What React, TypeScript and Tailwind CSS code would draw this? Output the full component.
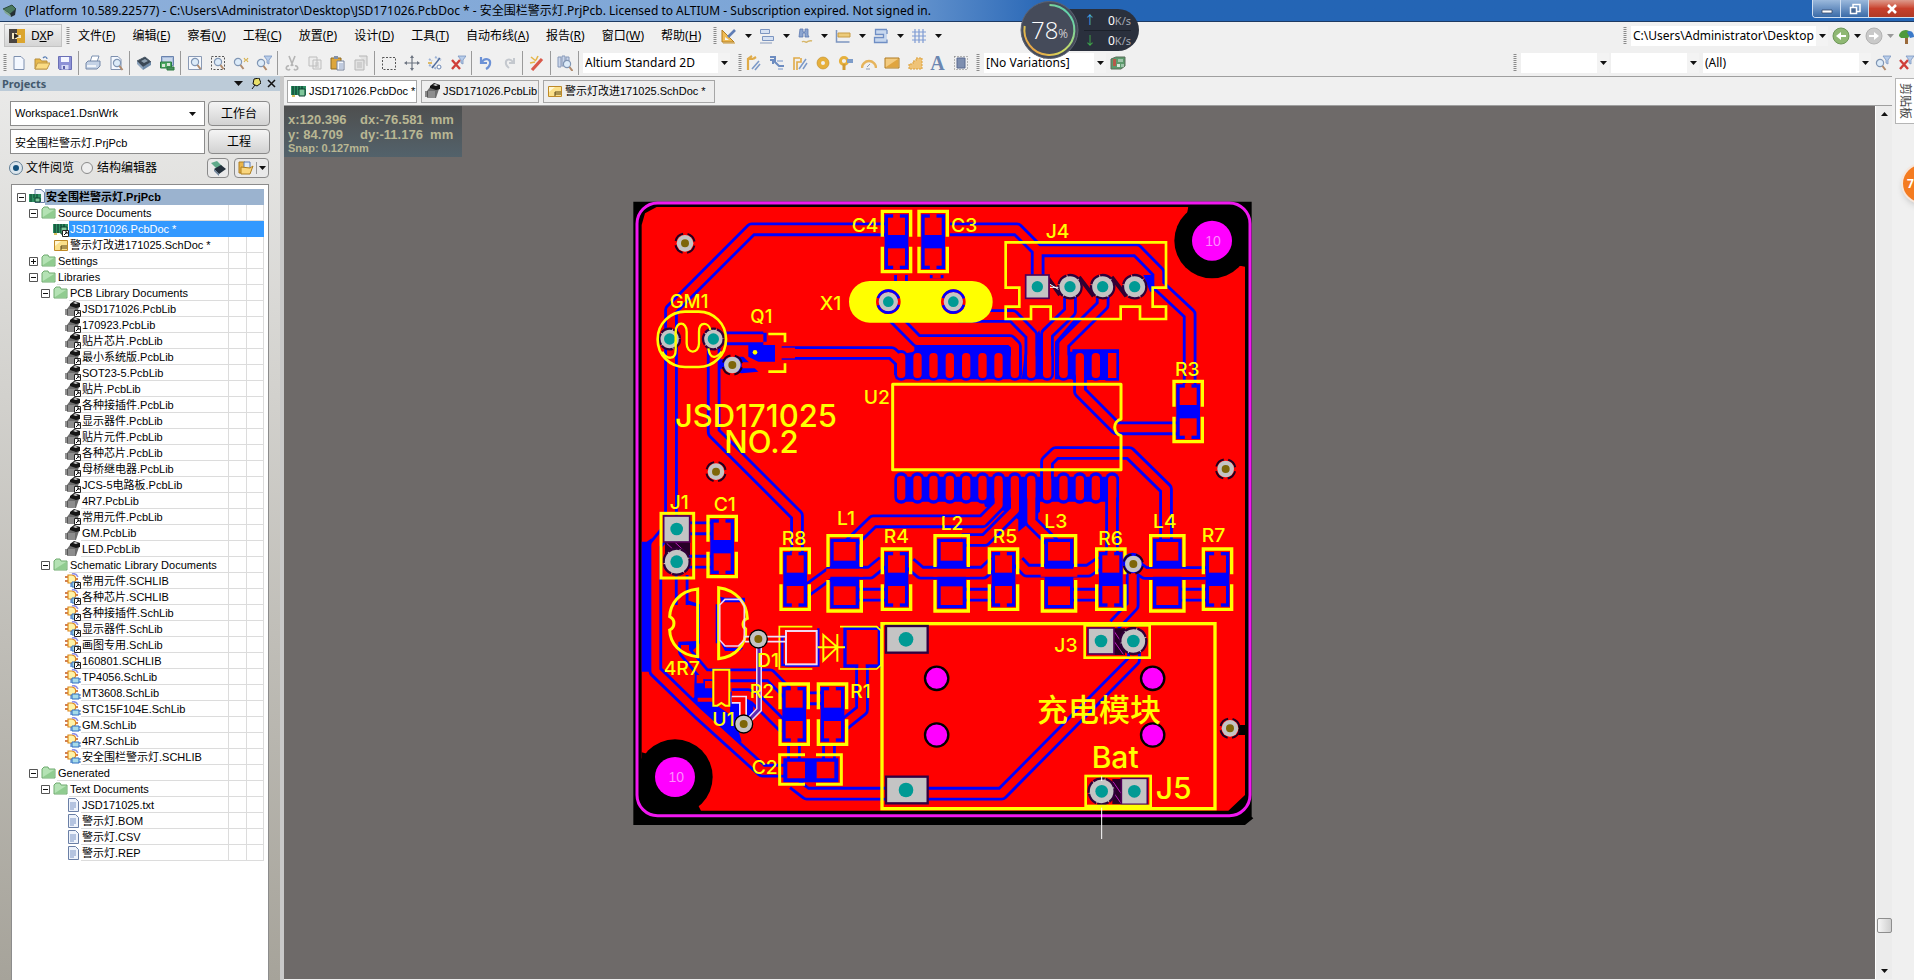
import React from "react";

/* ---------- small drawing helpers ---------- */

type SvgProps = { children: React.ReactNode; w?: number; h?: number };

function Ico({ children, w = 16, h = 16 }: SvgProps) {
  return (
    <svg width={w} height={h} viewBox={`0 0 ${w} ${h}`} aria-hidden="true" className="shrink-0">
      {children}
    </svg>
  );
}

const page = <path d="M3 1.5h7l3 3v10H3z" fill="#f4f8ff" stroke="#7d8fae" />;
const lens = (
  <>
    <circle cx="8" cy="7" r="3.6" fill="#dcebf9" stroke="#8096b4" strokeWidth="1.2" />
    <path d="M10.5 10l3 4" stroke="#b08a6c" strokeWidth="2" />
  </>
);
const funnel = <path d="M8 1h8l-3 4v4l-2-1V5z" fill="#b8cdea" stroke="#7a94c0" strokeWidth=".8" />;
const redX = <path d="M2 5l8 9M10 5l-8 9" stroke="#cf3f3a" strokeWidth="2.4" />;

const icons: Record<string, React.ReactNode> = {
  new: page,
  open: (
    <>
      <path d="M1 14V4h5l1.500 2H13v8z" fill="#e8b94a" stroke="#b58d3c" />
      <path d="M3.500 8H16l-3 6H1z" fill="#fbdc83" stroke="#c09a4c" />
      <path d="M9 3c2-2 4-1 4 1" fill="none" stroke="#5a7fb5" strokeWidth="1.300" />
    </>
  ),
  save: (
    <>
      <path d="M1.500 1.500h13v13h-12l-1-1z" fill="#8d92d6" stroke="#6a6fb5" />
      <path d="M4 2h8v5H4z" fill="#f4f6ff" />
      <path d="M4.500 10h7v4.500h-7z" fill="#d6daf5" />
      <path d="M6 11h2v3H6z" fill="#5b60a8" />
    </>
  ),
  print: (
    <>
      <path d="M5 7l2-6h7l-2 6z" fill="#fff" stroke="#7b90b0" />
      <path d="M1 8l2-2h12v5l-3 3H1z" fill="#c4d2e6" stroke="#7488a8" />
      <path d="M2 11h9" stroke="#fff" strokeWidth="1.500" />
    </>
  ),
  preview: (
    <>
      {page}
      <g transform="translate(1 1)">{lens}</g>
    </>
  ),
  chip: (
    <>
      <path d="M1 6l8-4 6 5-8 5z" fill="#3b4856" stroke="#4a5866" />
      <path d="M1 6l6 6v3L1 9z" fill="#8ea4bd" />
      <path d="M7 12l8-5v3l-8 5z" fill="#6e8aa8" />
      <path d="M5 6l4-2 3 2-4 2z" fill="#8fa0b0" />
    </>
  ),
  board: (
    <>
      <path d="M2.500 1.500h12v9h-12z" fill="#a9bddc" stroke="#6a83ad" />
      <path d="M4 4h9M4 6h9" stroke="#e8f0fa" />
      <path d="M1.500 7h11v6h-11z" fill="#4faa62" stroke="#2a7a40" />
      <path d="M3 9h3v3H3zM8 8h3v3H8z" fill="#d8e6d8" />
      <path d="M8 12h7v3H8z" fill="#4b8f5c" stroke="#2a7a40" />
    </>
  ),
  fitdoc: (
    <>
      <path d="M1.500 1.500h13v13h-13z" fill="#f4f7fc" stroke="#8a9ab5" />
      {lens}
    </>
  ),
  fitarea: (
    <>
      <path d="M1.500 1.500h13v13h-13z" fill="none" stroke="#555" strokeDasharray="2 1.500" />
      {lens}
    </>
  ),
  fitsel: (
    <>
      <g transform="translate(-3 0)">{lens}</g>
      <path d="M11 3l1.500 2L11 7M15 3l-1.500 2L15 7" stroke="#d6b04a" strokeWidth="1.200" fill="none" />
    </>
  ),
  fitfilter: (
    <>
      <g transform="translate(-3 1)">{lens}</g>
      {funnel}
    </>
  ),
  cut: (
    <path d="M5 1l4 10M11 1L7 11M5 11a2 2 0 1 0 1 3M11 11a2 2 0 1 1-1 3" fill="none" stroke="#b5b5b5" strokeWidth="1.600" />
  ),
  copy: (
    <>
      <path d="M2 2h8v9H2zM6 5h8v9H6z" fill="#ededed" stroke="#bdbdbd" />
      <path d="M8 8h4M8 10h4M8 12h4" stroke="#c4c4c4" />
    </>
  ),
  paste: (
    <>
      <path d="M1 3h10v11H1z" fill="#dda63b" stroke="#8d6a22" />
      <path d="M4 1h4v3H4z" fill="#8290a8" />
      <path d="M7 6h7v9H7z" fill="#f3f6fb" stroke="#76829a" />
      <path d="M9 9h4M9 11h4M9 13h4" stroke="#8da0c2" />
    </>
  ),
  rubber: (
    <>
      <path d="M2 5h9v10H2zM6 1h8v10" fill="#e2e2e2" stroke="#b6b6b6" />
      <path d="M4 8h5M4 10h5M4 12h5" stroke="#bbb" />
    </>
  ),
  marquee: <path d="M1.500 2.500h13v12h-13z" fill="none" stroke="#555" strokeDasharray="2 1.500" />,
  move: (
    <>
      <path d="M8 2v12M2 8h12" stroke="#6c7480" strokeWidth="1.200" />
      <path d="M8 0l2 3H6zM8 16l2-3H6zM0 8l3-2v4zM16 8l-3-2v4z" fill="#6c7480" />
    </>
  ),
  desel: (
    <>
      <path d="M2 4l3 2M2 10l8 4M8 2l6 3" stroke="#9db3d6" strokeWidth="2" strokeDasharray="2 1" />
      <path d="M13 3L5 13" stroke="#516d9d" strokeWidth="1.400" />
      <circle cx="12" cy="12" r="2" fill="#fff" stroke="#6d88b5" />
      <path d="M1 8h4" stroke="#d9a93a" strokeWidth="1.500" />
    </>
  ),
  clear: (
    <>
      {redX}
      {funnel}
    </>
  ),
  undo: <path d="M3 2v6h6M4 7c3-5 9-3 8 2-.5 2.500-2 4-4 5" fill="none" stroke="#6d92d6" strokeWidth="2.200" />,
  redo: <path d="M13 3v5H8M12 7C9 3 4 4 5 9c.4 2 2 3 3 4" fill="none" stroke="#c4c8ce" strokeWidth="2" />,
  wand: (
    <>
      <path d="M3 15L13 4" stroke="#d9594a" strokeWidth="3.200" />
      <path d="M2 2l5 4M9 1l-2 4M1 8l5-1" stroke="#e5b64a" strokeWidth="1.600" />
    </>
  ),
  browse: (
    <>
      <path d="M1 2h3v10H1zM5 1h3v10H5zM9 2h3v10H9z" fill="#cbd6ea" stroke="#8698b8" />
      <g transform="translate(2 2)">{lens}</g>
    </>
  ),
  route: (
    <>
      <path d="M2 15V4h5M2 4l4-3M7 4l3-2" fill="none" stroke="#e0ab48" strokeWidth="2.200" />
      <path d="M6 14l7-8M9 15l5-6" stroke="#7d9ac8" strokeWidth="1.600" />
    </>
  ),
  diff: (
    <>
      <path d="M1 2h5v5l4 4h5M1 5h3v4" fill="none" stroke="#6d8cc0" strokeWidth="2" />
      <path d="M8 6h6M9 14h5" stroke="#9db3d6" strokeWidth="1.500" />
    </>
  ),
  multi: (
    <>
      <path d="M2 15V3h6M5 15V7h4V3" fill="none" stroke="#e0ab48" strokeWidth="1.600" />
      <path d="M7 14l7-10M11 14l4-6" stroke="#7d9ac8" strokeWidth="1.500" />
    </>
  ),
  pad: (
    <>
      <circle cx="8" cy="8" r="4" fill="none" stroke="#e6b03c" strokeWidth="4" />
      <circle cx="8" cy="8" r="6" fill="none" stroke="#c08a22" strokeWidth=".6" />
    </>
  ),
  via: (
    <>
      <circle cx="6" cy="6" r="3.600" fill="none" stroke="#e6b03c" strokeWidth="3" />
      <path d="M9 4h6v4H9z" fill="#7d9cc9" />
      <path d="M6 9v6" stroke="#d09a32" strokeWidth="3" />
    </>
  ),
  arc: (
    <>
      <path d="M1 13a7 7 0 0 1 14 0" fill="none" stroke="#e6b45c" strokeWidth="2.400" />
      <path d="M6 12l3-3M5 14h4" fill="none" stroke="#8f9db5" />
    </>
  ),
  fill: (
    <>
      <path d="M1 3h14v10H1z" fill="#f3cb80" stroke="#b07b1e" />
      <path d="M2 12L14 4v8z" fill="#e0a540" />
    </>
  ),
  poly: <path d="M2 14V9h4V6h3V3h6v11z" fill="#efc377" stroke="#dba03a" strokeDasharray="2 1" />,
  comp: (
    <>
      <path d="M4 3h8v10H4z" fill="#7e8fb0" stroke="#5a6a90" />
      <path d="M1.500 1.500h13v13h-13z" fill="none" stroke="#777" strokeDasharray="1 2" />
    </>
  ),
  variant: (
    <>
      <path d="M1 4l5-2h9v9l-4 3H1z" fill="#5c9a6c" stroke="#5a6f5a" />
      <path d="M3 4h3v7H3z" fill="#b65a4a" />
      <path d="M7 9h3v3H7z" fill="#d9e8dc" />
      <path d="M8 4h5v3H8zM11 9h3v3h-3z" fill="#9fc5aa" />
    </>
  ),
  util: (
    <>
      <path d="M1 2v12h12z" fill="#f0bb53" stroke="#b07d22" />
      <path d="M4 9v3h4z" fill="#f5f5f5" />
      <path d="M7 9l7-7" stroke="#5f7db6" strokeWidth="2.600" />
      <path d="M2 15h12" stroke="#cfa24a" strokeWidth="1.200" />
    </>
  ),
  align: (
    <>
      <path d="M1.500 1.500h9v4h-9zM3.500 8.500h11v4h-11z" fill="#d5e1f3" stroke="#7c95c0" />
      <path d="M1 15h12" stroke="#8a9cbd" />
    </>
  ),
  find: (
    <>
      <path d="M3 1h3v3h2V1h3v6l1 2H8V5H6v4H2z" fill="#8ca5d0" stroke="#5d7ab0" strokeWidth=".8" />
      <path d="M5 14c2-2 3 1 5 0s3-2 5-1" fill="none" stroke="#d7b76b" strokeWidth="1.400" />
    </>
  ),
  dim: (
    <>
      <path d="M1.500 2v12h13" fill="none" stroke="#7c95c0" strokeWidth="1.500" />
      <path d="M3 5h12v4H3z" fill="#eccb7a" stroke="#c89c44" />
    </>
  ),
  room: (
    <>
      <path d="M14 1.500H2.500v5h8v3h-9v5H14v-3M14 2v4" fill="#c7d7ee" stroke="#6f8ec4" strokeWidth="1.300" />
    </>
  ),
  grid: <path d="M4 1v14M8 1v14M12 1v14M1 4h14M1 8h14M1 12h14" stroke="#7f9cd4" strokeWidth="1.200" />,
  tree: (
    <>
      <path d="M7 8h3v8H7z" fill="#9b6a3a" />
      <path d="M1 8c0-5 8-9 12-3l-3 5H3z" fill="#4f9a3c" />
      <path d="M9 4c4-3 7 1 7 5l-4 1z" fill="#3b79c9" />
    </>
  ),
  pcbDoc: (
    <>
      <path d="M0 3h15v9H0z" fill="#2f8f63" />
      <path d="M2 3v9M5 3v9M8 3v4M11 3v9" stroke="#0d4030" strokeWidth="1.200" />
      <path d="M8 6h6v7H8z" fill="#7fc79b" stroke="#0d4030" />
      <path d="M1 12h3v2H1z" fill="#d8c260" />
    </>
  ),
  schDoc: (
    <>
      <path d="M1.500 3.500h13v10h-13z" fill="#fbe08a" stroke="#bf8a28" />
      <path d="M2 4h6L2 9z" fill="#fff7d4" />
      <path d="M8 9h6M8 11h6M8 9v4" stroke="#5a4616" />
    </>
  ),
  pcbLib: (
    <>
      <path d="M2 8l3-4 6-1 3 3-3 9H2z" fill="#6c6c6c" />
      <path d="M2 8h8v7H2z" fill="#8d8d8d" />
      <path d="M5 3l4-3 6 2v4l-4 1-6-2z" fill="#161616" />
      <path d="M8 2l2-1 3 1-2 1z" fill="#d5d5d5" />
      <path d="M0 9h3M0 11h3M0 13h3" stroke="#222" />
    </>
  ),
  schLib: (
    <>
      <path d="M0 4h3M0 8h3M10 6h3" stroke="#c2571c" strokeWidth="1.300" />
      <path d="M3 2h4c5 1 5 7 0 8H3z" fill="#fff3a8" stroke="#df8a1e" strokeWidth="1.200" />
      <path d="M7 1c3-1 5 1 6 3" fill="none" stroke="#8f8fe6" strokeWidth="1.500" />
      <path d="M7 9h7v5H7z" fill="#a7dbe8" stroke="#2e6fc2" />
      <path d="M14 10h2M14 13h2M5 11h2M5 13h2" stroke="#2e6fc2" />
    </>
  ),
  folder: (
    <>
      <path d="M1 13V4l2-2h4l1 2h6v9z" fill="#b4e2b4" stroke="#6faa6f" />
      <path d="M2 12l11-7v8z" fill="#90cc90" />
    </>
  ),
  text: (
    <>
      <path d="M3.500 1.500h7l3 3v10h-10z" fill="#eef3fb" stroke="#6a7fa6" />
      <path d="M5 6h6M5 8h6M5 10h6M5 12h4" stroke="#7a94c4" />
    </>
  ),
  project: (
    <>
      <path d="M6 .5h6l3.500 3v10H6z" fill="#eef3fb" stroke="#6a7fa6" />
      <path d="M0 5h12v8H0z" fill="#2f8f63" />
      <path d="M2 5v8M5 5v4M8 5v8" stroke="#0d4030" />
      <path d="M6 9h5v4H6z" fill="#7fc79b" stroke="#0d4030" />
    </>
  ),
};

function Named({ name, shortcut }: { name: string; shortcut?: boolean }) {
  return (
    <Ico>
      {icons[name]}
      {shortcut && (
        <>
          <path d="M9.500 9.500h6v6h-6z" fill="#fff" stroke="#222" />
          <path d="M11 14l3-3M12 11h2v2" stroke="#111" fill="none" />
        </>
      )}
    </Ico>
  );
}

function Caret({ dim }: { dim?: boolean }) {
  return (
    <svg width="7" height="4" viewBox="0 0 7 4" aria-hidden="true" className="shrink-0">
      <path d="M0 0h7L3.500 4z" fill={dim ? "#999" : "#111"} />
    </svg>
  );
}

function Grip() {
  return (
    <svg width="4" height="18" viewBox="0 0 4 18" aria-hidden="true" className="shrink-0">
      <path d="M2 0v18" stroke="#8b8b8b" strokeWidth="3" strokeDasharray="1 1" />
    </svg>
  );
}

function Tool({ name, label }: { name: string; label: string }) {
  return (
    <button aria-label={label} className="flex h-6 w-[23px] shrink-0 items-center justify-center">
      <Named name={name} />
    </button>
  );
}

function Sep() {
  return <span className="mx-0.5 h-6 w-px shrink-0 bg-[#9a9a9a]" />;
}

function Combo({ label, value, className }: { label: string; value: string; className: string }) {
  return (
    <span className={`relative flex h-5 shrink-0 items-center bg-white ${className}`}>
      <select aria-label={label} className="h-5 w-full appearance-none overflow-hidden bg-transparent pr-3 pl-0.5 text-xs leading-5 outline-none">
        <option>{value}</option>
      </select>
      <span className="pointer-events-none absolute inset-y-0 right-0 flex w-3 items-center justify-center bg-[#f3f3f3]">
        <Caret />
      </span>
    </span>
  );
}

/* ---------- window chrome ---------- */

function TitleBar() {
  return (
    <header className="flex h-[22px] shrink-0 items-center border-b border-[#1d3a63] bg-linear-to-r from-[#8fb0da] via-[#7aa4d6] via-45% to-[#2465b5] to-55%">
      <span className="ml-0.5 flex">
        <Ico>
          <path d="M1 6l9-4 4 4-6 5z" fill="#4b7a60" stroke="#2c4a3a" />
          <path d="M8 11l6-5-1 6-4 2z" fill="#252f33" />
          <path d="M1 6l7 5 1 3-6-4z" fill="#7ea48e" />
        </Ico>
      </span>
      <h1 className="ml-[7px] font-[Noto_Sans,Noto_Sans_CJK_SC,sans-serif] text-xs leading-5 whitespace-nowrap text-black">
        (Platform 10.589.22577) - C:\Users\Administrator\Desktop\JSD171026.PcbDoc * - 安全围栏警示灯.PrjPcb. Licensed to ALTIUM - Subscription expired. Not signed in.
      </h1>
      <div className="ml-auto flex h-[18px] self-start overflow-hidden rounded-bl border-b border-l border-[#cfdff2]">
        <button aria-label="Minimize" className="flex w-7 items-center justify-center border-r border-[#cfdff2] bg-linear-to-b from-[#9bb9dc] to-[#3a6ba8]">
          <Ico w={12} h={12}><path d="M1 7h10v3H1z" fill="#fff" stroke="#33486a" strokeWidth=".8" /></Ico>
        </button>
        <button aria-label="Restore" className="flex w-7 items-center justify-center border-r border-[#cfdff2] bg-linear-to-b from-[#9bb9dc] to-[#3a6ba8]">
          <Ico w={12} h={12}>
            <path d="M4 1.500h7v7H4z" fill="none" stroke="#fff" strokeWidth="1.500" />
            <path d="M1.500 4.500h6v6h-6z" fill="#4a6a96" stroke="#fff" strokeWidth="1.500" />
          </Ico>
        </button>
        <button aria-label="Close" className="flex w-[45px] items-center justify-center bg-linear-to-b from-[#dc9a8c] via-[#c8402c] to-[#b03a26]">
          <Ico w={12} h={12}><path d="M2 2l8 8M10 2l-8 8" stroke="#fff" strokeWidth="2.600" /></Ico>
        </button>
      </div>
    </header>
  );
}

const menus: [string, string][] = [
  ["文件", "F"], ["编辑", "E"], ["察看", "V"], ["工程", "C"], ["放置", "P"], ["设计", "D"],
  ["工具", "T"], ["自动布线", "A"], ["报告", "R"], ["窗口", "W"], ["帮助", "H"],
];

function MenuRow() {
  return (
    <nav className="flex h-[27px] shrink-0 items-center">
      <button className="ml-1 flex h-[23px] w-[58px] items-center gap-1.5 border border-[#c3c3c3] bg-linear-to-b from-[#f2f2f2] to-[#d5d5d5] pl-1 text-xs">
        <Ico>
          <path d="M0 1h11v14H0z" fill="#4b4540" />
          <path d="M8 1h8v14H8z" fill="#dba52e" />
          <path d="M3 5h5v6H3zM8 7h4v3H8z" fill="#f5e9c4" />
          <path d="M5 5l5 3-5 3z" fill="#2a2522" />
        </Ico>
        <span>D<u>X</u>P</span>
      </button>
      <span className="mr-2 ml-1 flex"><Grip /></span>
      <div className="flex gap-[17px]">
        {menus.map(([t, k]) => (
          <button key={t} className="text-xs leading-5 whitespace-nowrap">
            {t}(<u>{k}</u>)
          </button>
        ))}
      </div>
      <div className="ml-3 flex items-center">
        <Grip />
        {[["util", "Utilities"], ["align", "Alignment"], ["find", "Find"], ["dim", "Dimensions"], ["room", "Rooms"], ["grid", "Grid"]].map(([n, l]) => (
          <button key={n} aria-label={l} className="flex w-[38px] items-center gap-2 pl-1">
            <Named name={n} />
            <Caret />
          </button>
        ))}
      </div>
      <div className="ml-auto flex shrink-0 items-center">
        <Grip />
        <Combo label="Document path" value="C:\Users\Administrator\Desktop" className="ml-1 w-[197px]" />
        <button aria-label="Back" className="ml-1 flex items-center gap-1">
          <Ico w={18} h={18}>
            <circle cx="9" cy="9" r="8" fill="#8fb873" stroke="#6f985a" />
            <path d="M4 9l5-4v3h5v2H9v3z" fill="#fff" />
          </Ico>
          <Caret />
        </button>
        <button aria-label="Forward" className="ml-1 flex items-center gap-1">
          <Ico w={18} h={18}>
            <circle cx="9" cy="9" r="8" fill="#c9c9c9" stroke="#b2b2b2" />
            <path d="M14 9L9 5v3H4v2h5v3z" fill="#fff" />
          </Ico>
          <Caret dim />
        </button>
        <button aria-label="Home" className="ml-1 flex"><Named name="tree" /></button>
      </div>
    </nav>
  );
}

const toolGroups: string[][] = [
  ["new", "open", "save"],
  ["print", "preview"],
  ["chip", "board"],
  ["fitdoc", "fitarea", "fitsel", "fitfilter"],
  ["cut", "copy", "paste", "rubber"],
  ["marquee", "move", "desel", "clear"],
  ["undo", "redo"],
  ["wand"],
  ["browse"],
];

function ToolRow() {
  return (
    <div className="flex h-[27px] shrink-0 items-center">
      <span className="ml-[3px] flex"><Grip /></span>
      {toolGroups.map((g, i) => (
        <React.Fragment key={i}>
          {i > 0 && <Sep />}
          {g.map((n) => <Tool key={n} name={n} label={n} />)}
        </React.Fragment>
      ))}
      <Sep />
      <Combo label="View configuration" value="Altium Standard 2D" className="ml-0.5 w-[147px]" />
      <span className="ml-2 flex"><Grip /></span>
      {["route", "diff", "multi", "pad", "via", "arc", "fill", "poly"].map((n) => <Tool key={n} name={n} label={n} />)}
      <button aria-label="Place string" className="w-[23px] text-center font-[Liberation_Serif,serif] text-xl leading-5 font-bold text-[#6b86b0]">A</button>
      <Tool name="comp" label="comp" />
      <span className="ml-1 flex"><Grip /></span>
      <Combo label="Variations" value="[No Variations]" className="ml-1 w-[122px]" />
      <Tool name="variant" label="variant" />
      <div className="ml-auto flex shrink-0 items-center pr-0">
        <Grip />
        <Combo label="Filter net" value="" className="ml-1 w-[88px]" />
        <Combo label="Filter component" value="" className="ml-0.5 w-[88px]" />
        <Combo label="Filter scope" value="(All)" className="ml-1 w-[168px]" />
        <Tool name="fitfilter" label="Apply filter" />
        <span className="flex w-5 overflow-hidden"><Tool name="clear" label="Clear filter" /></span>
      </div>
    </div>
  );
}

/* ---------- projects panel ---------- */

type Row = { level: 0 | 1 | 2 | 3; icon: string; text: string; open?: boolean; sc?: boolean; sel?: boolean };

const f = (level: 1 | 2, text: string, open = true): Row => ({ level, icon: "folder", text, open });
const d = (icon: string, text: string, sc = false): Row => ({ level: 3, icon, text, sc });

const rows: Row[] = [
  { level: 0, icon: "project", text: "安全围栏警示灯.PrjPcb", open: true },
  f(1, "Source Documents"),
  { level: 2, icon: "pcbDoc", text: "JSD171026.PcbDoc *", sc: true, sel: true },
  { level: 2, icon: "schDoc", text: "警示灯改进171025.SchDoc *" },
  f(1, "Settings", false),
  f(1, "Libraries"),
  f(2, "PCB Library Documents"),
  d("pcbLib", "JSD171026.PcbLib", true),
  d("pcbLib", "170923.PcbLib", true),
  d("pcbLib", "贴片芯片.PcbLib", true),
  d("pcbLib", "最小系统版.PcbLib", true),
  d("pcbLib", "SOT23-5.PcbLib", true),
  d("pcbLib", "贴片.PcbLib", true),
  d("pcbLib", "各种接插件.PcbLib", true),
  d("pcbLib", "显示器件.PcbLib", true),
  d("pcbLib", "贴片元件.PcbLib", true),
  d("pcbLib", "各种芯片.PcbLib", true),
  d("pcbLib", "母桥继电器.PcbLib", true),
  d("pcbLib", "JCS-5电路板.PcbLib", true),
  d("pcbLib", "4R7.PcbLib"),
  d("pcbLib", "常用元件.PcbLib", true),
  d("pcbLib", "GM.PcbLib"),
  d("pcbLib", "LED.PcbLib"),
  f(2, "Schematic Library Documents"),
  d("schLib", "常用元件.SCHLIB", true),
  d("schLib", "各种芯片.SCHLIB", true),
  d("schLib", "各种接插件.SchLib", true),
  d("schLib", "显示器件.SchLib", true),
  d("schLib", "画图专用.SchLib", true),
  d("schLib", "160801.SCHLIB", true),
  d("schLib", "TP4056.SchLib"),
  d("schLib", "MT3608.SchLib"),
  d("schLib", "STC15F104E.SchLib"),
  d("schLib", "GM.SchLib"),
  d("schLib", "4R7.SchLib"),
  d("schLib", "安全围栏警示灯.SCHLIB"),
  f(1, "Generated"),
  f(2, "Text Documents"),
  d("text", "JSD171025.txt"),
  d("text", "警示灯.BOM"),
  d("text", "警示灯.CSV"),
  d("text", "警示灯.REP"),
];

const indent = ["pl-[5px]", "pl-[17px]", "pl-[29px]", "pl-[41px]"];

function TreeRow({ r }: { r: Row }) {
  const tone = r.level === 0 ? "bg-[#9bb3cf] font-bold" : r.sel ? "bg-[#3399ff] text-white" : "";
  const cell = r.level === 0 || r.sel ? "border-transparent" : "border-[#dcdcdc]";
  return (
    <li className={`flex h-4 items-center ${indent[r.level]}`}>
      {r.open === undefined ? (
        <span className="w-[9px] shrink-0" />
      ) : (
        <button aria-label={r.open ? "Collapse" : "Expand"} className="flex shrink-0">
          <Ico w={9} h={9}>
            <path d="M.5.500h8v8h-8z" fill="#fff" stroke="#555" />
            <path d={r.open ? "M2 4.500h5" : "M2 4.500h5M4.500 2v5"} stroke="#111" />
          </Ico>
        </button>
      )}
      <span className="ml-[3px] flex"><Named name={r.icon} shortcut={r.sc} /></span>
      <span className={`flex h-4 min-w-0 flex-1 ${tone}`}>
        <span className={`min-w-0 flex-1 border-b pl-px leading-4 whitespace-nowrap ${cell}`}>{r.text}</span>
        <span className={`w-[18px] shrink-0 border-b border-l ${cell}`} />
        <span className={`w-[18px] shrink-0 border-x border-b ${cell}`} />
      </span>
    </li>
  );
}

const panelBtn = "flex h-[25px] w-[62px] shrink-0 items-center justify-center rounded-sm border border-[#8a8a8a] bg-linear-to-b from-[#f4f4f4] to-[#d2d2d2] text-xs";

function Projects() {
  return (
    <aside className="flex w-[284px] shrink-0 flex-col border-r-4 border-[#c9c9c9] bg-linear-to-b from-[#ebebea] to-[#a6a39a] font-[Liberation_Sans,Noto_Sans_CJK_SC,sans-serif] text-[11px]">
      <div className="flex h-[15px] shrink-0 items-center bg-[#bccbd8] pr-1 pl-0.5">
        <h2 className="flex-1 font-[Noto_Sans,sans-serif] text-[11px] leading-[14px] font-bold text-[#44596d]">Projects</h2>
        <button aria-label="Panel menu" className="mr-2"><svg width="9" height="5" viewBox="0 0 9 5"><path d="M0 0h9L4.500 5z" fill="#111" /></svg></button>
        <button aria-label="Pin" className="mr-1.5">
          <Ico w={10} h={12}><path d="M3 1l5-1 2 5-4 3-4-2z" fill="#e9e06a" stroke="#111" /><path d="M4 7l-3 4" stroke="#111" /></Ico>
        </button>
        <button aria-label="Close panel"><Ico w={9} h={9}><path d="M1 1l7 7M8 1L1 8" stroke="#111" strokeWidth="1.500" /></Ico></button>
      </div>
      <div className="mt-2.5 flex shrink-0 gap-[3px] pl-2.5">
        <span className="relative flex h-[25px] w-[195px] items-center border border-[#8c8c8c] bg-white">
          <select aria-label="Workspace" className="w-full appearance-none bg-transparent pl-1 text-[11px] outline-none">
            <option>Workspace1.DsnWrk</option>
          </select>
          <span className="pointer-events-none absolute right-2"><Caret /></span>
        </span>
        <button className={panelBtn}>工作台</button>
      </div>
      <div className="mt-[3px] flex shrink-0 gap-[3px] pl-2.5">
        <input aria-label="Project" defaultValue="安全围栏警示灯.PrjPcb" className="h-[25px] w-[195px] border border-[#8c8c8c] bg-white px-1 text-[11px] outline-none" />
        <button className={panelBtn}>工程</button>
      </div>
      <div className="mt-1 mb-1.5 flex shrink-0 items-center pl-2.5 text-xs">
        <label className="flex items-center gap-1">
          <input type="radio" name="mode" defaultChecked className="size-3 appearance-none rounded-full border border-[#7d8894] bg-white checked:border-[3px] checked:border-[#dbe6ee] checked:bg-[#12507c] checked:outline checked:outline-[#5f7e96]" />
          文件阅览
        </label>
        <label className="ml-[7px] flex items-center gap-1">
          <input type="radio" name="mode" className="size-3 appearance-none rounded-full border border-[#8a8a8a] bg-[#eee]" />
          结构编辑器
        </label>
        <button aria-label="Show workspace" className="ml-auto flex h-5 w-[22px] items-center justify-center rounded-sm border border-[#8a8a8a] bg-[#e9e9e9]">
          <Ico>
            <path d="M1 3l6-2 5 5-5 3z" fill="#5fa98a" />
            <path d="M4 9l7-4 5 4-7 5z" fill="#23303c" />
            <path d="M4 9l5 5v2L4 11z" fill="#6d8299" />
          </Ico>
        </button>
        <button aria-label="Open options" className="mr-[11px] ml-[5px] flex h-5 w-[35px] items-center justify-center gap-0.5 rounded-sm border border-[#8a8a8a] bg-[#e9e9e9]">
          <Ico>
            <path d="M1 2h6v11H1z" fill="#eab54a" stroke="#ad7e20" />
            <path d="M6 2h6v9H6z" fill="#dfeaf8" stroke="#5f7fb5" />
            <path d="M3 7l9 1 3-2-3 8H3z" fill="#f9d67e" stroke="#ad7e20" />
          </Ico>
          <span className="h-3 w-px bg-[#999]" />
          <Caret />
        </button>
      </div>
      <ul className="mr-[11px] ml-[11px] min-h-0 flex-1 overflow-hidden border border-b-0 border-[#8c8c8c] bg-white pt-1 pr-1">
        {rows.map((r, i) => <TreeRow key={i} r={r} />)}
      </ul>
    </aside>
  );
}

/* ---------- board drawing ---------- */

const RED = "#ff0000";
const BLUE = "#0000ff";
const YEL = "#ffff00";

const tracks: string[] = [
  "M810 103H380L138 345V990",
  "M975 103H1176L1238 165V250",
  "M1238 166H1535L1600 232V270L1694 358V575",
  "M1335 275V350L1266 417V540",
  "M1433 275V330L1315 447V540",
  "M790 350L877 438H1155L1170 453V540",
  "M1000 363H1163L1219 420V540",
  "M828 540V500L800 474H470",
  "M1365 540V590L1475 700H1670",
  "M300 430H415",
  "M266 450V712L516 962V1080",
  "M828 240V310M935 240V250",
  "M1266 860V800L1292 774H1513L1623 882V1040",
  "M1461 860V1075",
  "M1121 860V930L1073 979H745L672 1050",
  "M1170 860V945L1080 1035H1010",
  "M1219 860V980L1290 1050",
  "M540 1190L618 1133H735L775 1100",
  "M855 1105L888 1133H1075L1110 1100",
  "M1180 1100L1205 1127H1390L1430 1100",
  "M1523 1107L1560 1134H1770",
  "M1523 1107V1232L1468 1290",
  "M690 1199H790M1010 1199H1100M1330 1199H1420M1660 1199H1745",
  "M1527 1345V1395L1130 1796H545L505 1765",
  "M120 1015L91 1050V1428L222 1555L412 1727H480",
  "M190 1000H265M190 1100H265",
  "M170 1140V1230",
  "M180 1350V1370L240 1441H435L490 1497",
  "M320 1500H370L390 1510L480 1600",
  "M711 1410V1545L655 1590",
  "M545 1510H590M507 1645V1700M612 1645V1700",
];

function TwoPin({ x, y, w = 95, h = 190, inset = 0 }: { x: number; y: number; w?: number; h?: number; inset?: number }) {
  const a = y + h * 0.4;
  const b = y + h * 0.6;
  return (
    <g>
      <path d={`M${x + 12} ${y + 14}H${x + w - 12}V${y + h - 12}H${x + 12}z`} fill={BLUE} />
      <path d={`M${x + 22} ${y + 24}H${x + w - 22}V${a - inset}H${x + 22}z`} fill={RED} />
      <path d={`M${x + 22} ${b + 2 + inset}H${x + w - 22}V${y + h - 22}H${x + 22}z`} fill={RED} />
      {inset > 0 && <path d={`M${x} ${y + 104}H${x + w}V${y + 128}H${x}z`} fill={RED} />}
      <path d={`M${x + w / 2 - 10} ${y + 12}h20v14h-20zM${x + w / 2 - 10} ${y + h - 24}h20v14h-20z`} fill={inset ? "none" : RED} />
      <path
        d={`M${x + 5} ${a}V${y + 5}H${x + w - 5}V${a}M${x + 5} ${b + 2}V${y + h - 4}H${x + w - 5}V${b + 2}`}
        fill="none" stroke={YEL} strokeWidth="10" strokeLinecap="square"
      />
    </g>
  );
}

function Via({ x, y, solid }: { x: number; y: number; solid?: boolean }) {
  return (
    <g>
      {solid
        ? <circle cx={x} cy={y} r="29" fill="#000" />
        : <circle cx={x} cy={y} r="29" fill="none" stroke="#200020" strokeWidth="6" strokeDasharray="32 13.500" strokeDashoffset="-7" />}
      <circle cx={x} cy={y} r="25" fill="#c4c4c4" />
      <circle cx={x} cy={y} r="12" fill="#7d6608" />
    </g>
  );
}

function Pad({ x, y, sq, r = 32, hole = 17 }: { x: number; y: number; sq?: boolean; r?: number; hole?: number }) {
  return (
    <g>
      {sq
        ? <rect x={x - r - 2} y={y - r - 2} width={2 * r + 4} height={2 * r + 4} fill="#c4c4c4" stroke="#500058" strokeWidth="5" />
        : <circle cx={x} cy={y} r={r + 3} fill="#c4c4c4" stroke="#300038" strokeWidth="7" strokeDasharray="36 3" />}
      <circle cx={x} cy={y} r={hole} fill="#009a94" />
    </g>
  );
}

const silkFont = "font-[Inter,Noto_Sans_CJK_SC,sans-serif] font-medium";

function Silk({ x, y, s = 58, children }: { x: number; y: number; s?: number; children: string }) {
  return <text x={x} y={y} fontSize={s} fill={YEL} className={silkFont}>{children}</text>;
}

const pins = Array.from({ length: 14 }, (_, i) => 828 + Math.round(i * 48.7));

function Board() {
  return (
    <svg width="645" height="655" viewBox="0 0 1935 1965" role="img" aria-label="PCB layout JSD171025" className="block">
      <path d="M25 20H1880V1865L1885 1870L1860 1890H25z" fill="#000" />
      <path d="M50 90L60 55L95 36H1690L1685 60L1800 200L1845 212L1860 215V1800L1810 1847H228L60 1700L50 1690z" fill={RED} />
      <path d="M1690 36H1860V212H1760zM50 1672L150 1700L228 1847H50z" fill="#000" />
      <circle cx="1761" cy="137" r="113" fill="#000" />
      <circle cx="150" cy="1746" r="113" fill="#000" />
      <rect x="36" y="24" width="1839" height="1838" rx="62" fill="none" stroke="#f018f0" strokeWidth="9" />
      <circle cx="1761" cy="137" r="60" fill="#ff00ff" />
      <circle cx="150" cy="1746" r="60" fill="#ff00ff" />
      <text x="1764" y="152" textAnchor="middle" fontSize="42" fill="#ff8cff" className="font-[Liberation_Sans,sans-serif]">10</text>
      <text x="154" y="1762" textAnchor="middle" fontSize="42" fill="#ff8cff" className="font-[Liberation_Sans,sans-serif]">10</text>

      {/* clearances, then copper */}
      <g fill="none" stroke={BLUE} strokeWidth="41" strokeLinejoin="round">
        {tracks.map((t) => <path key={t} d={t} />)}
      </g>
      <g fill={BLUE}>
        <path d="M868 455H1145L1190 500V553H868zM1200 470L1243 405L1255 470L1280 553H1190z" />
        <path d="M1290 440L1350 370H1378L1320 440V470H1350V553H1290z" />
        <path d="M1342 463H1482V555H1342zM812 480L868 470V553H812z" />
        <path d="M812 845H1482V920H812zM1065 880H1245V950L1200 990L1150 950L1080 935z" />
        <path d="M1180 940H1235V985L1205 990L1180 1010z" />
        <path d="M50 1040L65 1040L80 1030V1430H50zM50 1415H80L100 1450z" />
        <path d="M370 450H450V500H400L370 485zM375 440H425V413H415zM1555 240H1585V290H1575z" />
        {/* small pads around U1 */}
        <path d="M210 1425L262 1440V1545H200L190 1530L208 1505V1470z" />
        <path d="M190 1520H260L330 1570L350 1640L335 1640L235 1545z" />
        <path d="M315 1490H360L385 1520V1560L350 1600L315 1560z" />
        {/* clearance edges of the two half pads */}
        <path d="M185 1215L225 1228V1345L195 1375L160 1370V1340L218 1338V1235L185 1228z" />
        <path d="M272 1228H282V1345H272zM285 1205L300 1208H360V1222H290zM285 1340L305 1358H355L345 1368H300z" />
      </g>
      <path d="M215 1440H235V1465H215zM240 1458H262V1480H240zM218 1508H262V1520H218z" fill={RED} />
      <g fill={BLUE}>
        {pins.map((x, i) => (
          <React.Fragment key={i}>
            <rect x={x - 20} y="465" width="41" height="92" rx={i === 13 ? 0 : 20} />
            <rect x={x - 20} y="832" width="41" height="94" rx="20" />
          </React.Fragment>
        ))}
      </g>
      <g fill="none" stroke={RED} strokeWidth="24" strokeLinejoin="round">
        {tracks.map((t) => <path key={t} d={t} />)}
      </g>
      <g fill={RED}>
        {pins.map((x, i) => (
          <React.Fragment key={i}>
            <rect x={x - 12} y="474" width="25" height="75" rx={i === 13 ? 0 : 12} />
            <rect x={x - 12} y="842" width="25" height="74" rx="12" />
          </React.Fragment>
        ))}
      </g>

      {/* light sensor and transistor */}
      <path d="M282 495L350 480L400 530L350 535L282 520z" fill={BLUE} />
      <path d="M300 458H365V485H300zM350 502H420V520H350z" fill={RED} />
      <path d="M450 458H510V490H450z" fill={RED} />
      <path d="M430 417H480V442M480 505V530H430" fill="none" stroke={YEL} strokeWidth="8" />
      <circle cx="390" cy="472" r="7" fill={YEL} />
      <Pad x={134} y={432} r={28} />
      <Pad x={265} y={432} r={28} />
      <rect x="98" y="350" width="205" height="166" rx="82" fill="none" stroke={YEL} strokeWidth="8" />
      <path d="M112 470C125 495 152 495 152 465V410C152 378 185 378 185 410V445C185 478 222 478 222 445V410C222 378 252 382 256 405M250 460C255 495 275 490 290 470" fill="none" stroke={YEL} strokeWidth="7" />

      {/* crystal */}
      <rect x="672" y="258" width="431" height="125" rx="62" fill={YEL} />
      {[790, 985].map((x) => (
        <g key={x}>
          <circle cx={x} cy="320" r="33" fill="#c4c4c4" stroke={RED} strokeWidth="8" />
          <circle cx={x} cy="320" r="33" fill="none" stroke={BLUE} strokeWidth="8" strokeDasharray="82 22" strokeDashoffset="-10" />
          <circle cx={x} cy="320" r="16" fill="#009a94" />
        </g>
      ))}

      {/* connector J4 */}
      <path d="M1270 250L1305 300M1362 246L1406 304M1460 246L1504 304" stroke="#300030" strokeWidth="12" />
      <Pad x={1237} y={275} sq r={33} />
      <Pad x={1335} y={275} />
      <Pad x={1433} y={275} />
      <Pad x={1529} y={275} />
      <path d="M1142 142H1623V278H1583V335H1623V372H1545V335H1487V372H1277V335H1218V372H1142V335H1183V278H1142z" fill="none" stroke={YEL} strokeWidth="8" />
      <path d="M1275 268L1300 283M1275 277H1300" stroke="#fff" strokeWidth="3" />

      {/* controller */}
      <path d="M803 568H1488V672A26 26 0 0 0 1488 722V824H803z" fill="none" stroke={YEL} strokeWidth="9" strokeLinejoin="round" />

      <TwoPin x={767} y={44} />
      <TwoPin x={877} y={44} />
      <TwoPin x={1642} y={554} />
      <TwoPin x={244} y={959} />
      <TwoPin x={463} y={1057} />
      <TwoPin x={767} y={1057} />
      <TwoPin x={1088} y={1057} />
      <TwoPin x={1410} y={1057} />
      <TwoPin x={1730} y={1057} />
      {[604, 925, 1247, 1572].map((x) => <TwoPin key={x} x={x} y={1017} w={110} h={235} inset={14} />)}
      <TwoPin x={460} y={1462} />
      <TwoPin x={575} y={1462} />
      <path d="M475 1690H640V1762H475z" fill={BLUE} />
      <path d="M487 1700H540V1750H487zM575 1700H628V1750H575z" fill={RED} />
      <path d="M540 1679H464V1768H540M573 1679H649V1768H573" fill="none" stroke={YEL} strokeWidth="9" />

      {/* half-round pads */}
      <path d="M218 1182C160 1188 135 1230 134 1265A22 22 0 0 1 134 1305C135 1345 165 1380 218 1385z" fill="none" stroke={YEL} strokeWidth="9" />
      <path d="M281 1178C335 1185 365 1225 367 1270A18 18 0 0 0 362 1302C365 1345 335 1385 281 1391z" fill="none" stroke={YEL} strokeWidth="9" />
      <path d="M284 1230L300 1213H345L358 1232V1335L340 1353H300L284 1335z" fill="none" stroke="#f0d0f0" strokeWidth="5" />

      {/* diode */}
      <rect x="660" y="1300" width="103" height="113" fill={RED} stroke={BLUE} strokeWidth="10" />
      <path d="M700 1405H722V1425H700z" fill={RED} />
      <path d="M472 1325H485V1410H472zM480 1412H580V1300" fill="none" stroke={BLUE} strokeWidth="7" />
      <rect x="483" y="1308" width="92" height="100" fill={RED} stroke="#f0d8f0" strokeWidth="6" />
      <path d="M562 1295H463V1422H562M645 1295H755L768 1307V1410L755 1422H645" fill="none" stroke={YEL} strokeWidth="5" />
      <path d="M595 1320L637 1357L595 1397zM637 1317V1400M578 1357H660" fill="none" stroke={YEL} strokeWidth="6" />

      {/* U1 */}
      <path d="M265 1424H313V1532H301L289 1524L277 1532H265z" fill={RED} stroke={YEL} strokeWidth="6" />
      <path d="M402 1350V1544L372 1575" fill="none" stroke="#e8d8f8" strokeWidth="18" />
      <path d="M402 1350V1544L372 1575" fill="none" stroke="#6028b0" strokeWidth="9" />
      <path d="M320 1514H354V1570" fill="none" stroke="#f0e0f8" strokeWidth="24" />
      <path d="M320 1514H354V1570" fill="none" stroke={RED} strokeWidth="14" />
      <path d="M360 1325H395M425 1325H483M360 1340H395M425 1340H483" stroke="#f0e0f8" strokeWidth="5" />

      {/* charger module */}
      <rect x="771" y="1286" width="999" height="555" fill="none" stroke={YEL} strokeWidth="10" />
      {[[845, 1333], [845, 1785]].map(([x, y]) => (
        <g key={y}>
          <rect x={x - 62} y={y - 40} width="125" height="80" fill="#c4c4c4" stroke="#300040" strokeWidth="7" />
          <circle cx={x - 2} cy={y} r="22" fill="#009a94" />
        </g>
      ))}
      {[[935, 1450], [935, 1620], [1583, 1450], [1583, 1620]].map(([x, y]) => (
        <circle key={`${x}-${y}`} cx={x} cy={y} r="35" fill="#ff00ff" stroke="#000" strokeWidth="7" />
      ))}

      {/* two-pin headers */}
      <path d="M120 1042H195V1080H120zM1465 1300H1500V1380H1465zM1462 1752H1490V1828H1462z" fill="#280028" />
      <path d="M125 1045L160 1078M150 1042L185 1075M1468 1310L1495 1350M1468 1340L1495 1378M1464 1760L1488 1795M1464 1790L1488 1825" stroke="#c020c0" strokeWidth="3" />
      <Pad x={155} y={1002} sq r={37} hole={19} />
      <Pad x={155} y={1100} r={36} hole={19} />
      <rect x="108" y="955" width="98" height="194" fill="none" stroke={YEL} strokeWidth="9" />
      <Pad x={1428} y={1338} sq r={37} hole={19} />
      <Pad x={1525} y={1338} r={36} hole={19} />
      <rect x="1379" y="1291" width="195" height="97" fill="none" stroke={YEL} strokeWidth="8" />
      <Pad x={1430} y={1789} r={36} hole={19} />
      <Pad x={1528} y={1789} sq r={37} hole={19} />
      <rect x="1382" y="1743" width="195" height="90" fill="none" stroke={YEL} strokeWidth="8" />
      <path d="M1430 1744V1758M1430 1838V1932" stroke="#fff" strokeWidth="3" />

      <Via x={180} y={145} />
      <Via x={273} y={830} />
      <Via x={322} y={510} />
      <Via x={1802} y={822} />
      <circle cx="1523" cy="1104" r="31" fill={BLUE} />
      <Via x={1525} y={1107} />
      <path d="M1840 1590H1862V1620H1840z" fill="#000" />
      <Via x={1815} y={1600} />
      <Via x={400} y={1332} solid />
      <Via x={356} y={1587} solid />

      <Silk x={680} y={110}>C4</Silk>
      <Silk x={978} y={110}>C3</Silk>
      <Silk x={1262} y={128}>J4</Silk>
      <Silk x={134} y={338} s={56}>GM1</Silk>
      <Silk x={376} y={385} s={56}>Q1</Silk>
      <Silk x={584} y={345}>X1</Silk>
      <Silk x={716} y={627}>U2</Silk>
      <Silk x={1650} y={542}>R3</Silk>
      <text fill={YEL} fontSize="93" className={silkFont}>
        <tspan x="150" y="695">JSD171025</tspan>
        <tspan x="298" y="773">NO.2</tspan>
      </text>
      <Silk x={134} y={943}>J1</Silk>
      <Silk x={266} y={947}>C1</Silk>
      <Silk x={470} y={1049}>R8</Silk>
      <Silk x={636} y={990}>L1</Silk>
      <Silk x={776} y={1045}>R4</Silk>
      <Silk x={947} y={1005}>L2</Silk>
      <Silk x={1103} y={1045}>R5</Silk>
      <Silk x={1258} y={1000}>L3</Silk>
      <Silk x={1420} y={1051}>R6</Silk>
      <Silk x={1584} y={998}>L4</Silk>
      <Silk x={1730} y={1041}>R7</Silk>
      <Silk x={116} y={1441}>4R7</Silk>
      <Silk x={396} y={1415}>D1</Silk>
      <Silk x={262} y={1594}>U1</Silk>
      <Silk x={374} y={1510}>R2</Silk>
      <Silk x={676} y={1510}>R1</Silk>
      <Silk x={380} y={1737}>C2</Silk>
      <Silk x={1288} y={1371}>J3</Silk>
      <Silk x={1236} y={1577} s={93}>充电模块</Silk>
      <Silk x={1400} y={1720} s={90}>Bat</Silk>
      <Silk x={1592} y={1812} s={90}>J5</Silk>
    </svg>
  );
}

/* ---------- document area ---------- */

const tabs = [
  { icon: "pcbDoc", text: "JSD171026.PcbDoc *", w: "w-[130px]", on: true },
  { icon: "pcbLib", text: "JSD171026.PcbLib", w: "w-[118px]", on: false },
  { icon: "schDoc", text: "警示灯改进171025.SchDoc *", w: "w-[172px]", on: false },
];

function Documents() {
  return (
    <main className="flex min-w-0 flex-1 flex-col pb-px">
      <div className="flex h-[30px] shrink-0 items-center gap-1 border-t border-b border-[#9f9f9f] pl-[3px] font-[Liberation_Sans,Noto_Sans_CJK_SC,sans-serif] text-[11px]">
        {tabs.map((t) => (
          <button key={t.text} className={`flex h-[23px] shrink-0 items-center gap-0.5 border border-[#a6a6a6] pl-[3px] whitespace-nowrap ${t.w} ${t.on ? "bg-white" : "bg-[#eeeeee]"}`}>
            <Named name={t.icon} />
            {t.text}
          </button>
        ))}
      </div>
      <div className="flex min-h-0 flex-1">
        <div className="relative min-w-0 flex-1 overflow-hidden bg-[#6e6a69]">
          <div className="absolute top-[89px] left-[341px]"><Board /></div>
          <div className="absolute top-0 left-0 h-[51px] w-[178px] bg-linear-to-b from-[#4e4f4f] to-[#53626b] px-1 pt-1.5 font-[Liberation_Sans,sans-serif] text-[13px] leading-[15px] font-bold text-[#b9b793]">
            <div className="grid grid-cols-[72px_1fr] whitespace-nowrap">
              <span>x:120.396</span><span>dx:-76.581&nbsp; mm</span>
              <span>y: 84.709</span><span>dy:-11.176&nbsp; mm</span>
            </div>
            <div className="text-[11px] leading-3">Snap: 0.127mm</div>
          </div>
        </div>
        <div className="flex w-[17px] shrink-0 flex-col items-center border-l border-white bg-[#ececec] py-1.5">
          <button aria-label="Scroll up" className="rotate-180"><Caret /></button>
          <span className="flex-1" />
          <span className="size-[15px] rounded-xs border border-[#8e8e8e] bg-linear-to-r from-[#f6f6f6] to-[#cfcfcf]" />
          <span className="h-9" />
          <button aria-label="Scroll down"><Caret /></button>
        </div>
      </div>
    </main>
  );
}

function SpeedBadge() {
  return (
    <div className="absolute top-0 left-[1020px] z-10 flex items-start text-white">
      <div className="relative z-10 size-[59px]">
        <svg width="59" height="59" viewBox="0 0 59 59" className="absolute inset-0" aria-hidden="true">
          <defs>
            <linearGradient id="gauge" x1="0" y1="1" x2="1" y2="0">
              <stop offset="0" stopColor="#f08a3c" />
              <stop offset=".4" stopColor="#d8dc5c" />
              <stop offset="1" stopColor="#3fd0c4" />
            </linearGradient>
          </defs>
          <circle cx="29.500" cy="30" r="28.500" fill="#454b5a" stroke="#5c6270" />
          <path d="M29.500 5a25 25 0 1 1-24.800 21" fill="none" stroke="url(#gauge)" strokeWidth="2" />
        </svg>
        <span className="relative flex h-[59px] items-center justify-center font-[Open_Sans,sans-serif] text-2xl font-light">
          78<span className="pt-2 text-xs">%</span>
        </span>
      </div>
      <div className="mt-[9px] -ml-5 grid h-[42px] w-20 grid-rows-2 rounded-r-full bg-[#2a303d] pt-0.5 pr-2 pl-[25px] text-xs leading-5">
        <div className="flex justify-between border-b border-[#1c212b]"><span className="text-[#47b4e8]">↑</span><span>0<span className="text-[11px] text-[#a5a9b2]">K/s</span></span></div>
        <div className="flex justify-between"><span className="text-[#3fae4c]">↓</span><span>0<span className="text-[11px] text-[#a5a9b2]">K/s</span></span></div>
      </div>
    </div>
  );
}

export default function App() {
  return (
    <div className="relative flex h-screen flex-col overflow-hidden bg-[#f0f0f0] font-[Noto_Sans,Noto_Sans_CJK_SC,sans-serif] text-xs text-black">
      <TitleBar />
      <MenuRow />
      <ToolRow />
      <div className="flex min-h-0 flex-1">
        <Projects />
        <Documents />
        <div className="flex w-[22px] shrink-0 flex-col items-end pt-0.5">
          <button className="h-[46px] w-[19px] border border-r-0 border-[#b5b5b5] bg-white text-xs leading-none text-[#444] [text-orientation:sideways] [writing-mode:vertical-rl]">剪贴板</button>
        </div>
      </div>
      <SpeedBadge />
      <button aria-label="Float ball 7" className="absolute top-[163px] -right-7 z-10 flex size-[41px] items-center rounded-full border-2 border-[#f6e6dc] bg-[#f47b20] pl-1 font-bold text-white shadow-md">7</button>
    </div>
  );
}
